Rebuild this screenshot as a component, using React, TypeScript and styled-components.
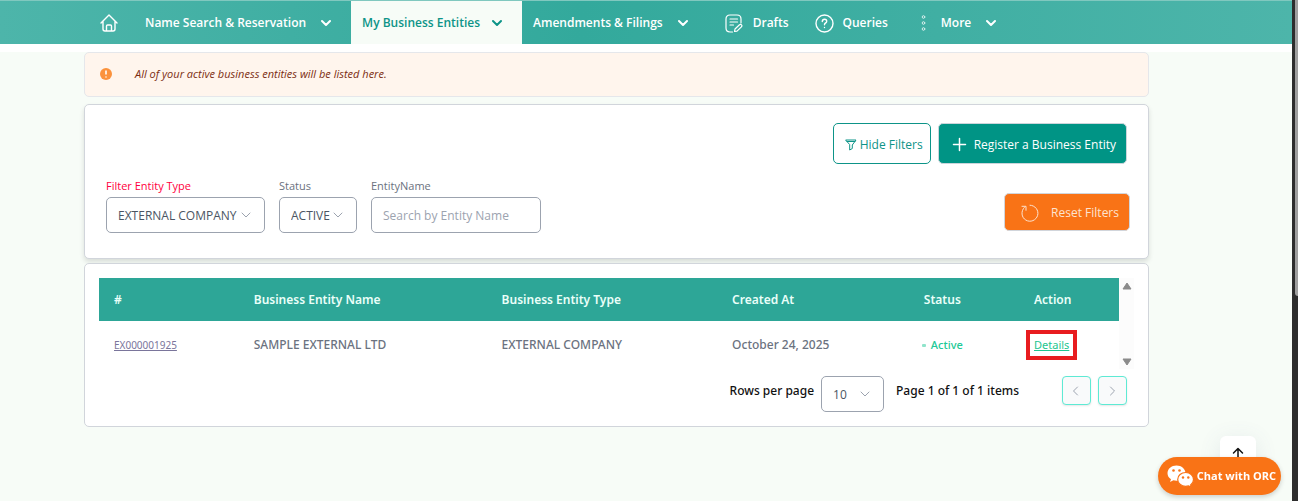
import React from "react";
import styled, { createGlobalStyle, css } from "styled-components";

const Global = createGlobalStyle`
  *, *::before, *::after { box-sizing: border-box; }
  html, body { margin: 0; }
  body {
    background: #f7fcf7;
    color: #6b7280;
    font-family: "Open Sans", "Noto Sans", sans-serif;
    font-size: 12px;
    line-height: 20px;
  }
  button, input, select { font: inherit; }
`;

const Page = styled.div`
  display: flex;
  min-height: 100vh;
`;

const Main = styled.div`
  flex: 1;
  min-width: 0;
`;

const Edge = styled.div`
  flex: none;
  width: 6px;
  padding-left: 3px;
  background: #2d2d2d;
`;

const EdgeThumb = styled.div`
  height: 296px;
  border-radius: 0 0 0 3px;
  background: #9f9f9f;
`;

const Nav = styled.nav`
  display: flex;
  height: 44px;
  padding-left: 84px;
  border-top: 1px solid #80c8bf;
  background: linear-gradient(90deg, #4db5aa, #33a99c 45%, #4db5aa);
`;

const NavLink = styled.a<{ $active?: boolean; $left: number; $right: number; $gap: number }>`
  display: flex;
  align-items: center;
  gap: ${(p) => p.$gap}px;
  padding: 1px ${(p) => p.$right}px 0 ${(p) => p.$left}px;
  color: ${(p) => (p.$active ? "#0d9488" : "#fff")};
  background: ${(p) => (p.$active ? "#f7fcf7" : "transparent")};
  font-weight: 600;
  text-decoration: none;
  white-space: nowrap;
`;

const Band = styled.div`
  height: 8px;
  background: #fff;
`;

const Content = styled.main`
  display: flex;
  flex-direction: column;
  margin: 0 143px 0 84px;
`;

const Notice = styled.div`
  display: flex;
  align-items: center;
  gap: 23px;
  height: 45px;
  padding: 0 15px 1px;
  border: 1px solid #e5e7eb;
  border-radius: 5px;
  background: #fff5ed;
  color: #7c2d12;
  font-size: 11px;
  font-style: italic;
`;

const Card = styled.section<{ $raised?: boolean }>`
  border: 1px solid #d1d5db;
  border-radius: 5px;
  background: #fff;
  ${(p) => p.$raised && css`box-shadow: 0 3px 5px rgba(0, 0, 0, 0.12);`}
`;

const FilterCard = styled(Card)`
  height: 155px;
  margin: 7px 0 4px;
  padding: 18px 18px 0 21px;
`;

const Actions = styled.div`
  display: flex;
  justify-content: flex-end;
  gap: 7px;
  padding-right: 3px;
`;

const Button = styled.button<{ $kind: "outline" | "primary" | "reset" }>`
  display: flex;
  align-items: center;
  height: 41px;
  border-radius: 5px;
  white-space: nowrap;
  ${(p) => p.$kind === "outline" && css`
    gap: 3px; padding: 2px 7px 0 11px; border: 1px solid #0d9488; background: #fff; color: #0d9488;
  `}
  ${(p) => p.$kind === "primary" && css`
    gap: 7px; padding: 2px 10px 0 13px; border: 1px solid #cbd5db; background: #009485; color: #fff;
  `}
  ${(p) => p.$kind === "reset" && css`
    gap: 12px; height: 38px; padding: 2px 10px 0 16px; border: 1px solid #d1d5db; background: #f97316; color: #fde3d0;
  `}
`;

const FilterRow = styled.div`
  display: flex;
  align-items: flex-start;
  gap: 14px;
  padding-top: 12px;
`;

const Field = styled.div<{ $width: number }>`
  width: ${(p) => p.$width}px;
`;

const Label = styled.label<{ $error?: boolean }>`
  display: block;
  padding-bottom: 1px;
  color: ${(p) => (p.$error ? "#ff0040" : "#6b7280")};
  font-size: 11px;
`;

const SelectBox = styled.div<{ $width?: number }>`
  position: relative;
  width: ${(p) => (p.$width ? `${p.$width}px` : "100%")};
  color: #9ca3af;
  svg { position: absolute; right: 14px; top: 50%; margin-top: -5px; pointer-events: none; }
`;

const Select = styled.select`
  appearance: none;
  width: 100%;
  height: 36px;
  padding: 2px 11px 0;
  border: 1px solid #9ca3af;
  border-radius: 5px;
  background: #fff;
  color: #4b5563;
`;

const Input = styled.input`
  width: 100%;
  height: 36px;
  padding: 0 11px;
  border: 1px solid #9ca3af;
  border-radius: 5px;
  background: #fff;
  color: #4b5563;
  &::placeholder { color: #9ca3af; opacity: 1; }
`;

const ResetSlot = styled.div`
  margin: 17px 0 0 auto;
`;

const TableCard = styled(Card)`
  padding: 14px;
`;

const Scroller = styled.div`
  display: flex;
`;

const Table = styled.table`
  flex: 1;
  table-layout: fixed;
  border-collapse: collapse;
  font-family: "Noto Sans", sans-serif;
  th, td { padding: 0 15px; text-align: left; white-space: nowrap; }
  th { height: 43px; background: #2da697; color: #eafff9; font-weight: 600; }
  td { height: 48px; font-weight: 500; }
`;

const EntityLink = styled.a`
  color: #7a759b;
  font-size: 10px;
  font-weight: 400;
`;

const StatusTag = styled.span`
  display: flex;
  align-items: center;
  gap: 5px;
  color: #22c997;
  font-size: 11px;
  &::before { content: ""; width: 4px; height: 3px; margin-left: -2px; border-radius: 1px; background: #90e4cb; }
`;

const DetailsLink = styled.a`
  display: inline-block;
  margin-left: -8px;
  padding: 1px 4px;
  border: 4px solid #e81c1f;
  color: #1dc690;
  font-size: 11px;
  font-weight: 400;
`;

const ScrollTrack = styled.div`
  display: flex;
  flex-direction: column;
  justify-content: space-between;
  align-items: center;
  flex: none;
  width: 15px;
  padding: 4px 0 3px;
  background: #fcfcfc;
`;

const Pager = styled.div`
  display: flex;
  align-items: flex-start;
  justify-content: flex-end;
  padding: 7px 7px 0 0;
  color: #111;
  font-weight: 500;
`;

const PagerText = styled.label`
  padding: 5px 7px 0 0;
  font-family: "Noto Sans", sans-serif;
`;

const PagerInfo = styled.span`
  padding: 5px 43px 0 12px;
  font-family: "Noto Sans", sans-serif;
`;

const PageButton = styled.button`
  display: flex;
  align-items: center;
  justify-content: center;
  width: 29px;
  height: 29px;
  padding: 0 1px 0 0;
  border: 1px solid #5eead4;
  border-radius: 4px;
  background: #f9fafb;
  box-shadow: 0 1px 2px rgba(0, 0, 0, 0.1);
  color: #9ca3af;
  & + & { margin-left: 7px; }
`;

const TopButton = styled.button`
  position: fixed;
  right: 42px;
  bottom: 29px;
  display: flex;
  justify-content: center;
  width: 36px;
  height: 36px;
  padding: 11px 0 0;
  border: 0;
  border-radius: 6px;
  background: #fff;
  box-shadow: 0 4px 22px rgba(80, 100, 140, 0.12);
`;

const ChatButton = styled.button`
  position: fixed;
  right: 17px;
  bottom: 6px;
  display: flex;
  align-items: center;
  gap: 3px;
  height: 38px;
  padding: 0 5px 0 9px;
  border: 0;
  border-radius: 19px;
  background: #f97316;
  box-shadow: 0 2px 5px rgba(0, 0, 0, 0.18);
  color: #fff;
  font-size: 11px;
  font-weight: 700;
  white-space: nowrap;
`;

const Stroke = styled.svg.attrs({ fill: "none", stroke: "currentColor", strokeLinecap: "round", strokeLinejoin: "round", "aria-hidden": true })`
  flex: none;
`;

const Chevron = ({ weight = 2 }: { weight?: number }) => (
  <Stroke width="10" height="10" viewBox="0 0 10 10" strokeWidth={weight}><path d={weight > 1 ? "M1 3l4 4 4-4" : "M1 3l4 4 4-4"} /></Stroke>
);

const HomeIcon = () => (
  <Stroke width="18" height="18" viewBox="0 0 18 18" strokeWidth="1.4">
    <path d="M1 9l8-8 8 8M3 7.5V15q0 2 2 2h8q2 0 2-2V7.500M6.500 17v-5q0-1 1-1h3q1 0 1 1v5" />
  </Stroke>
);

const DraftIcon = () => (
  <Stroke width="18" height="19" viewBox="0 0 18 19" strokeWidth="1.200">
    <path d="M7.500 18H5q-4 0-4-4V5q0-4 4-4h7q4 0 4 4v4M5 5h7.500M5 8h7.500M5 11h3.500M9.500 17.500l.5-2.500 4.500-4.300q1.200-.8 2 .1.900 1-.1 2L12 17.200z" />
  </Stroke>
);

const QueryIcon = () => (
  <Stroke width="19" height="19" viewBox="0 0 19 19" strokeWidth="1.400">
    <circle cx="9.500" cy="9.500" r="8.500" />
    <path d="M7.300 7.500q.1-2.200 2.300-2.200 2.100 0 2.100 1.900 0 1.200-1.200 1.800-1 .5-1 1.800M9.500 13.400v.1" />
  </Stroke>
);

const DotsIcon = () => (
  <Stroke width="5" height="16" viewBox="0 0 5 16" strokeWidth="1" opacity="0.8">
    <circle cx="2.500" cy="2" r="1.300" /><circle cx="2.500" cy="8" r="1.300" /><circle cx="2.500" cy="14" r="1.300" />
  </Stroke>
);

const AlertIcon = () => (
  <svg width="12" height="12" viewBox="0 0 12 12" aria-hidden="true">
    <circle cx="6" cy="6" r="6" fill="#fb923c" />
    <path d="M6 2.500v4M6 8.400v1" stroke="#fff" strokeWidth="1.600" />
  </svg>
);

const FunnelIcon = () => (
  <Stroke width="12" height="12" viewBox="0 0 12 12" strokeWidth="1">
    <path d="M1 1h10L7.300 6v3.500L4.700 11V6zM2 2.500h8" />
  </Stroke>
);

const PlusIcon = () => (
  <Stroke width="15" height="15" viewBox="0 0 15 15" strokeWidth="1.500"><path d="M7.500 1.500v12M1.500 7.500h12" /></Stroke>
);

const ResetIcon = () => (
  <Stroke width="18" height="18" viewBox="0 0 18 18" strokeWidth="1">
    <path d="M9 1.200a8 8 0 1 1-5.700 2.300M1 2.300h4v4" />
  </Stroke>
);

const TriangleIcon = ({ down }: { down?: boolean }) => (
  <svg width="10" height="8" viewBox="0 0 10 8" aria-hidden="true">
    <path d={down ? "M1 1h8L5 7z" : "M5 1l4 6H1z"} fill="#8b8b8b" stroke="#8b8b8b" strokeLinejoin="round" />
  </svg>
);

const ArrowUp = () => (
  <Stroke width="12" height="14" viewBox="0 0 12 14" strokeWidth="1.500" color="#111"><path d="M6 13V2M1.500 6L6 1.500 10.500 6" /></Stroke>
);

const ChatIcon = () => (
  <svg width="27" height="23" viewBox="0 0 27 23" aria-hidden="true">
    <path d="M9.500.5C4.500.5.500 3.900.500 8.200c0 2.500 1.300 4.600 3.500 6L3 17l3.400-1.700c1 .3 2 .5 3.200.5 5 0 8.900-3.400 8.900-7.600S14.500.500 9.500.500z" fill="#fff" />
    <path d="M18.700 7.500c-4.500 0-8 3-8 6.900s3.500 6.900 8 6.900c1 0 2-.2 2.900-.4l2.800 1.500-.8-2.500c1.800-1.300 2.900-3.200 2.900-5.500 0-3.900-3.400-6.900-7.800-6.900z" fill="#fff" stroke="#f97316" strokeWidth="1.200" />
    <g fill="#f97316"><circle cx="6.500" cy="5.500" r="1.300" /><circle cx="12.500" cy="5.500" r="1.300" /><circle cx="16" cy="12.500" r="1.200" /><circle cx="21.300" cy="12.500" r="1.200" /></g>
  </svg>
);

export default function App() {
  return (
    <Page>
      <Global />
      <Main>
        <Nav>
          <NavLink href="#home" aria-label="Home" $left={16} $right={17} $gap={0}><HomeIcon /></NavLink>
          <NavLink href="#names" $left={10} $right={20} $gap={15}>Name Search &amp; Reservation<Chevron /></NavLink>
          <NavLink href="#entities" $active $left={11} $right={20} $gap={12}>My Business Entities<Chevron /></NavLink>
          <NavLink href="#filings" $left={11} $right={20} $gap={15}>Amendments &amp; Filings<Chevron /></NavLink>
          <NavLink href="#drafts" $left={17} $right={10} $gap={10}><DraftIcon />Drafts</NavLink>
          <NavLink href="#queries" $left={16} $right={16} $gap={9}><QueryIcon />Queries</NavLink>
          <NavLink href="#more" $left={17} $right={20} $gap={15}><DotsIcon />More<Chevron /></NavLink>
        </Nav>
        <Band />
        <Content>
          <Notice role="status"><AlertIcon />All of your active business entities will be listed here.</Notice>
          <FilterCard $raised>
            <Actions>
              <Button $kind="outline" type="button"><FunnelIcon />Hide Filters</Button>
              <Button $kind="primary" type="button"><PlusIcon />Register a Business Entity</Button>
            </Actions>
            <FilterRow>
              <Field $width={159}>
                <Label htmlFor="type" $error>Filter Entity Type</Label>
                <SelectBox><Select id="type"><option>EXTERNAL COMPANY</option></Select><Chevron weight={1} /></SelectBox>
              </Field>
              <Field $width={78}>
                <Label htmlFor="status">Status</Label>
                <SelectBox><Select id="status"><option>ACTIVE</option></Select><Chevron weight={1} /></SelectBox>
              </Field>
              <Field $width={170}>
                <Label htmlFor="name">EntityName</Label>
                <Input id="name" placeholder="Search by Entity Name" />
              </Field>
              <ResetSlot><Button $kind="reset" type="button"><ResetIcon />Reset Filters</Button></ResetSlot>
            </FilterRow>
          </FilterCard>
          <TableCard>
            <Scroller>
              <Table>
                <colgroup>
                  <col style={{ width: "13.7%" }} /><col style={{ width: "24.3%" }} /><col style={{ width: "22.6%" }} />
                  <col style={{ width: "18.8%" }} /><col style={{ width: "10.8%" }} /><col />
                </colgroup>
                <thead>
                  <tr><th>#</th><th>Business Entity Name</th><th>Business Entity Type</th><th>Created At</th><th>Status</th><th>Action</th></tr>
                </thead>
                <tbody>
                  <tr>
                    <td><EntityLink href="#EX000001925">EX000001925</EntityLink></td>
                    <td>SAMPLE EXTERNAL LTD</td>
                    <td>EXTERNAL COMPANY</td>
                    <td>October 24, 2025</td>
                    <td><StatusTag>Active</StatusTag></td>
                    <td><DetailsLink href="#details">Details</DetailsLink></td>
                  </tr>
                </tbody>
              </Table>
              <ScrollTrack><TriangleIcon /><TriangleIcon down /></ScrollTrack>
            </Scroller>
            <Pager>
              <PagerText htmlFor="rows">Rows per page</PagerText>
              <SelectBox $width={63}><Select id="rows"><option>10</option></Select><Chevron weight={1} /></SelectBox>
              <PagerInfo>Page 1 of 1 of 1 items</PagerInfo>
              <PageButton type="button" aria-label="Previous page"><Stroke width="10" height="10" viewBox="0 0 10 10"><path d="M6.500 1l-4 4 4 4" /></Stroke></PageButton>
              <PageButton type="button" aria-label="Next page"><Stroke width="10" height="10" viewBox="0 0 10 10"><path d="M3.500 1l4 4-4 4" /></Stroke></PageButton>
            </Pager>
          </TableCard>
        </Content>
      </Main>
      <Edge><EdgeThumb /></Edge>
      <TopButton type="button" aria-label="Back to top"><ArrowUp /></TopButton>
      <ChatButton type="button"><ChatIcon />Chat with ORC</ChatButton>
    </Page>
  );
}
